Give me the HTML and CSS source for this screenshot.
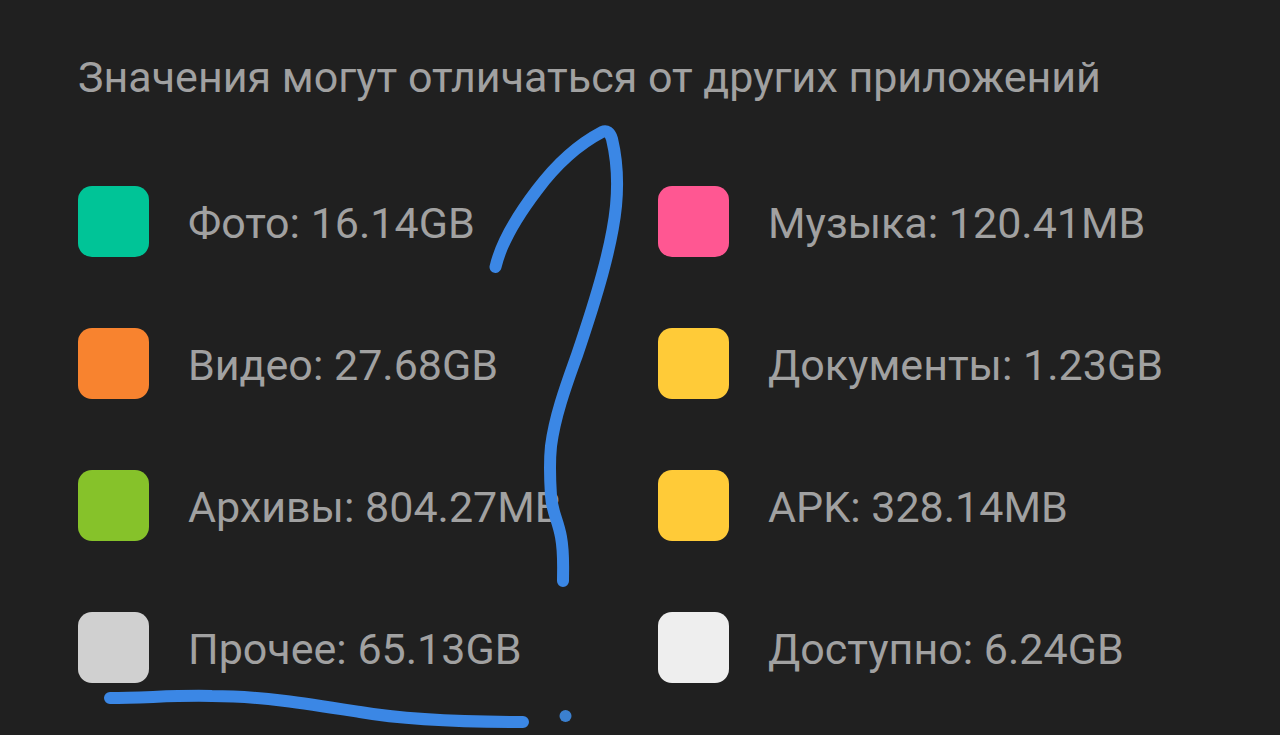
FILE: index.html
```
<!DOCTYPE html>
<html lang="ru">
<head>
<meta charset="utf-8">
<meta name="viewport" content="width=device-width, initial-scale=1">
<title>Хранилище</title>
<link rel="stylesheet" href="styles.css">
</head>
<body>
<main class="storage">
  <p class="note">Значения могут отличаться от других приложений</p>
  <ul class="legend">
    <li class="item"><span class="swatch photo"></span><span class="label">Фото: 16.14GB</span></li>
    <li class="item"><span class="swatch music"></span><span class="label">Музыка: 120.41MB</span></li>
    <li class="item"><span class="swatch video"></span><span class="label">Видео: 27.68GB</span></li>
    <li class="item"><span class="swatch docs"></span><span class="label">Документы: 1.23GB</span></li>
    <li class="item"><span class="swatch archives"></span><span class="label">Архивы: 804.27MB</span></li>
    <li class="item"><span class="swatch apk"></span><span class="label">APK: 328.14MB</span></li>
    <li class="item"><span class="swatch other"></span><span class="label">Прочее: 65.13GB</span></li>
    <li class="item"><span class="swatch free"></span><span class="label">Доступно: 6.24GB</span></li>
  </ul>
  <svg class="ink" width="1280" height="735" viewBox="0 0 1280 735" aria-hidden="true">
    <path d="M495.500 267C501 243 518 215 537 190C558 162 581 143 602 132Q609 129 612 139C617 160 618 185 616 206C612 246 597 296 577 355C567 383 555 415 551 446C549 465 550 480 551 496C552 512 558 520 561 537C564 553 563 567 563 581"/>
    <path d="M110 698C145 698 175 695 212 696C262 696 310 704 360 712C400 719 450 722 523 722"/>
    <circle cx="565.500" cy="716" r="6"/>
  </svg>
</main>
</body>
</html>
```
FILE: styles.css
```
* {
  box-sizing: border-box;
}

body {
  margin: 0;
  background: #202020;
  color: #a1a1a1;
  font-family: Roboto, "Noto Sans", sans-serif;
  font-size: 43px;
  line-height: 52px;
}

.storage {
  position: relative;
  min-height: 100vh;
  padding: 51px 42px 51px 78px;
  overflow: hidden;
}

.note {
  margin: 0 0 83px;
}

.legend {
  display: grid;
  grid-template-columns: 1fr 1fr;
  row-gap: 71px;
  margin: 0;
  padding: 0;
  list-style: none;
}

.item {
  display: flex;
  align-items: center;
  gap: 39px;
  white-space: nowrap;
}

.label {
  padding-top: 3px;
}

.swatch {
  flex: none;
  width: 71px;
  height: 71px;
  border-radius: 14px;
}

.photo { background: #00c497; }
.music { background: #ff5792; }
.video { background: #f8832f; }
.docs,
.apk { background: #ffcb38; }
.archives { background: #86c22a; }
.other { background: #d0d0d0; }
.free { background: #eeeeee; }

.ink {
  position: absolute;
  top: 0;
  left: 0;
  fill: none;
  stroke: #3b87e5;
  stroke-width: 12;
  stroke-linecap: round;
  stroke-linejoin: round;
}

.ink circle {
  fill: #3b80d0;
  stroke: none;
}
```
